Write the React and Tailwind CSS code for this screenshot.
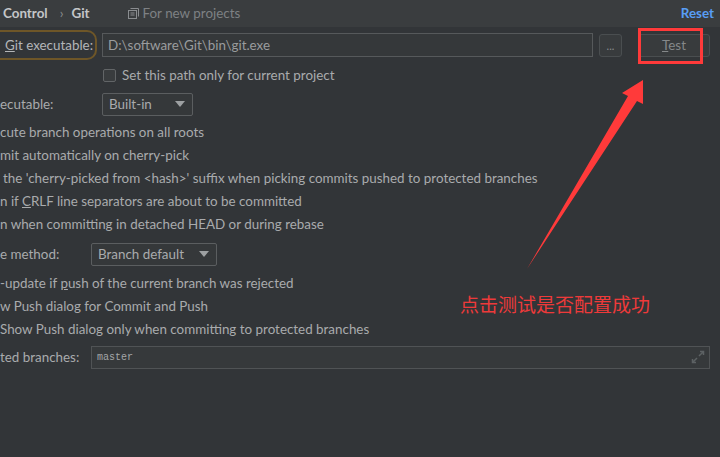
import React from "react";

const labelText = "text-[#a9abad]";

function CopyIcon() {
  return (
    <svg width="11" height="11" viewBox="0 0 11 11" fill="none" stroke="#8a8d90" strokeWidth="1">
      <path d="M2.5 0.5 H10.5 V8.5" />
      <rect x="0.5" y="2.5" width="8" height="8" />
      <path d="M2.5 5 H6.5 M2.5 7 H6.5" />
    </svg>
  );
}

function Caret() {
  return (
    <svg width="10" height="6" viewBox="0 0 10 6">
      <path d="M0 0 H10 L5 6 Z" fill="#9da0a2" />
    </svg>
  );
}

function Dropdown({ value, width }) {
  return (
    <div
      className={`${width} h-[23px] flex items-center justify-between pl-[6px] pr-[7px] border border-[#5b5e60] rounded-[2px] bg-[#35383a] ${labelText}`}
    >
      <span>{value}</span>
      <Caret />
    </div>
  );
}

function Line({ children, pad = "" }) {
  return (
    <div className={`h-[23px] flex items-center whitespace-nowrap ${pad} ${labelText}`}>
      <span>{children}</span>
    </div>
  );
}

export default function App() {
  return (
    <div
      className="relative w-[720px] h-[457px] overflow-hidden bg-[#323538] text-[13.4px]"
      style={{ fontFamily: "Lato, 'Noto Sans', sans-serif" }}
    >
      {/* breadcrumb header */}
      <div className="h-[27px] flex items-center bg-[#3a3d3f] pr-[6px]">
        <span className="pl-[3px] font-bold text-[#c4c6c8]">Control</span>
        <span className="ml-[12px] text-[#8a8d90]">›</span>
        <span className="ml-[8px] font-bold text-[#c4c6c8]">Git</span>
        <span className="ml-[38px] flex items-center gap-[4px] text-[#7e8184]">
          <CopyIcon />
          <span>For new projects</span>
        </span>
        <span className="ml-auto font-bold text-[#589df6]">Reset</span>
      </div>

      <div className="flex flex-col">
        {/* git executable */}
        <div className="h-[36px] flex items-center">
          <div className="-ml-[12px] w-[109px] h-[30px] flex items-center pl-[15px] border-2 border-[#6e5628] rounded-[10px] text-[#b4b6b8] whitespace-nowrap">
            <span>
              <span className="underline">G</span>it executable:
            </span>
          </div>
          <div className="ml-[5px] w-[491px] h-[24px] flex items-center px-[5px] border border-[#56595b] bg-[#35383a] text-[#9a9c9e]">
            D:\software\Git\bin\git.exe
          </div>
          <div className="ml-[6px] w-[23px] h-[23px] flex items-center justify-center rounded-[3px] border border-[#4a4e50] bg-[#383b3d] text-[#8a8d90] text-[11px] pt-[3px]">
            ...
          </div>
          <div className="ml-[16px] w-[72px] h-[23px] flex items-center justify-center rounded-[3px] border border-[#4a4e50] bg-[#383b3d] text-[#85888a]">
            <span>
              <span className="underline">T</span>est
            </span>
          </div>
        </div>

        {/* path checkbox */}
        <div className="h-[24px] flex items-center pl-[103px] gap-[6px] whitespace-nowrap">
          <div className="w-[13px] h-[13px] rounded-[2px] border border-[#626567] bg-[#393c3e]" />
          <span className={labelText}>Set this path only for current project</span>
        </div>

        {/* ssh executable */}
        <div className="h-[34px] flex items-center">
          <span className={`w-[102px] whitespace-nowrap ${labelText}`}>ecutable:</span>
          <Dropdown value="Built-in" width="w-[91px]" />
        </div>

        <Line>cute branch operations on all roots</Line>
        <Line>mit automatically on cherry-pick</Line>
        <Line pad="pl-[3px]">the 'cherry-picked from &lt;hash&gt;' suffix when picking commits pushed to protected branches</Line>
        <Line>
          n if <span className="underline">C</span>RLF line separators are about to be committed
        </Line>
        <Line>n when committing in detached HEAD or during rebase</Line>

        {/* update method */}
        <div className="h-[36px] flex items-center">
          <span className={`w-[91px] whitespace-nowrap ${labelText}`}>e method:</span>
          <Dropdown value="Branch default" width="w-[126px]" />
        </div>

        <Line>
          -update if <span className="underline">p</span>ush of the current branch was rejected
        </Line>
        <Line>w Push dialog for Commit and Push</Line>
        <Line>Show Push dialog only when committing to protected branches</Line>

        {/* protected branches */}
        <div className="h-[32px] flex items-center">
          <span className={`w-[91px] whitespace-nowrap ${labelText}`}>ted branches:</span>
          <div className="w-[619px] h-[23px] flex items-center justify-between pl-[5px] pr-[4px] border border-[#505355] bg-[#36393b]">
            <span className="text-[10px] text-[#a4a6a8]" style={{ fontFamily: "'Liberation Mono', monospace" }}>
              master
            </span>
            <svg width="14" height="14" viewBox="0 0 14 14" fill="none" stroke="#5c6163" strokeWidth="1.5">
              <path d="M8 6 L12.5 1.5 M9 1.5 H12.5 V5" />
              <path d="M6 8 L1.5 12.5 M1.5 9 V12.5 H5" />
            </svg>
          </div>
        </div>
      </div>

      {/* annotation overlay */}
      <div className="absolute left-[638px] top-[28px] w-[65px] h-[36px] border-[3px] border-[#ff3a3a]" />
      <svg className="absolute left-0 top-0" width="720" height="457" viewBox="0 0 720 457">
        <polygon points="527,269 628,96 622,93 643,80 643,104 637,101" fill="#ff3a3a" />
      </svg>
      <div
        className="absolute left-[460px] top-[290px] text-[19px] text-[#ee3a3a]"
        style={{ fontFamily: "'Noto Sans CJK SC', sans-serif" }}
      >
        点击测试是否配置成功
      </div>
    </div>
  );
}
